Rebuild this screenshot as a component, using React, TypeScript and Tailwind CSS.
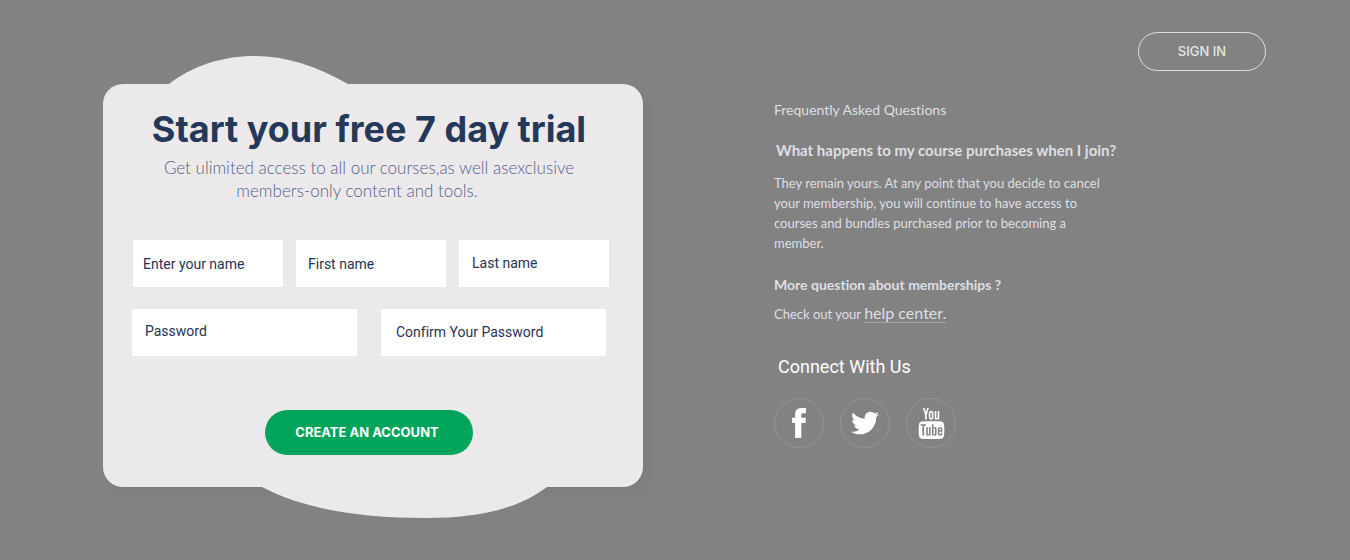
import { TfiFacebook, TfiTwitterAlt, TfiYoutube } from "react-icons/tfi";

type FieldProps = {
  name: string;
  label: string;
  type?: string;
  padding: string;
};

function Field({ name, label, type = "text", padding }: FieldProps) {
  return (
    <input
      name={name}
      type={type}
      aria-label={label}
      placeholder={label}
      className={`h-[47px] w-full min-w-0 bg-white font-['Roboto',sans-serif] text-sm text-[#263357] outline-none placeholder:text-[#263357] placeholder:opacity-100 ${padding}`}
    />
  );
}

function TrialCard() {
  return (
    <section className="relative mt-[84px] w-full max-w-[540px] rounded-[20px] bg-[#ebe9ea] pb-8 shadow-[6px_6px_8px_rgba(0,0,0,0.03)]">
      <svg
        className="absolute bottom-full left-[65px] -mb-px"
        width="182"
        height="30"
        viewBox="0 0 182 30"
        fill="#ebe9ea"
        aria-hidden="true"
      >
        <path d="M0 29.5 C24 11 54 1 87 1 C118 1 148 11 181 29.5 V30 H0 Z" />
      </svg>
      <svg
        className="absolute left-[159px] top-full -mt-px"
        width="286"
        height="33"
        viewBox="0 0 286 33"
        fill="#ebe9ea"
        aria-hidden="true"
      >
        <path d="M0 0 V1 C44 24 100 32 164 32 C216 32 256 23 285 1 V0 Z" />
      </svg>

      <div className="pt-[22px] pr-2 text-center">
        <h1 className="font-['Inter',sans-serif] text-4xl leading-[46px] font-bold text-[#263859]">
          Start your free 7 day trial
        </h1>
        <p className="mt-1 text-[17px] leading-[23px] font-light text-[#53628a]">
          Get ulimited access to all our courses,as well asexclusive{" "}
          <span className="block pr-6">members-only content and tools.</span>
        </p>
      </div>

      <form className="mt-[38px]" onSubmit={(e) => e.preventDefault()}>
        <div className="grid grid-cols-3 gap-[13px] pr-[34px] pl-[30px]">
          <Field name="full-name" label="Enter your name" padding="px-[10px]" />
          <Field name="first-name" label="First name" padding="px-3" />
          <Field name="last-name" label="Last name" padding="px-[13px] pb-0.5" />
        </div>
        <div className="mt-[22px] grid grid-cols-2 gap-6 pr-[37px] pl-[29px]">
          <Field name="password" label="Password" type="password" padding="px-[13px] pb-1" />
          <Field name="confirm-password" label="Confirm Your Password" type="password" padding="px-[15px] pb-0.5" />
        </div>
        <div className="mt-[54px] flex justify-center pr-2">
          <button
            type="submit"
            className="h-[45px] w-[208px] rounded-full bg-[#00a45a] pr-1 font-['Inter',sans-serif] text-[13px] font-bold text-white"
          >
            CREATE AN ACCOUNT
          </button>
        </div>
      </form>
    </section>
  );
}

const socials = [
  { label: "Facebook", icon: <TfiFacebook size={30} /> },
  { label: "Twitter", icon: <TfiTwitterAlt size={28} /> },
  { label: "YouTube", icon: <TfiYoutube size={31} /> },
];

export default function App() {
  return (
    <main className="flex min-h-screen items-start gap-[131px] bg-[#828282] pr-[84px] pb-[73px] pl-[103px] font-['Lato',sans-serif] [font-variant-ligatures:none]">
      <TrialCard />
      <div className="flex flex-1 basis-[492px] shrink-0 flex-col pt-8 text-[#dedfe3]">
        <button
          type="button"
          className="h-[39px] w-[128px] self-end rounded-full border border-[#dedede] font-['Inter',sans-serif] text-[13px] font-medium text-[#e6e6e6]"
        >
          SIGN IN
        </button>

        <h2 className="mt-[29px] text-sm leading-5">Frequently Asked Questions</h2>
        <h3 className="mt-5 pl-0.5 text-[15px] leading-5 font-bold">
          What happens to my course purchases when I join?
        </h3>
        <p className="mt-[13px] max-w-[340px] text-[13px] leading-5">
          They remain yours. At any point that you decide to cancel your membership, you will continue to have
          access to courses and bundles purchased prior to becoming a member.
        </p>
        <h3 className="mt-[22px] text-sm leading-5 font-bold">More question about memberships ?</h3>
        <p className="mt-2 text-[13px] leading-[22px]">
          Check out your{" "}
          <a href="#help" className="border-b border-[#a5a5a8] text-base leading-none">
            help center.
          </a>
        </p>

        <h2 className="mt-[30px] pl-1 font-['Roboto',sans-serif] text-lg leading-6 text-white">Connect With Us</h2>
        <ul className="mt-[19px] flex gap-4">
          {socials.map(({ label, icon }) => (
            <li key={label}>
              <a
                href={`#${label.toLowerCase()}`}
                aria-label={label}
                className="flex size-[50px] items-center justify-center rounded-full border border-[#949494] text-white"
              >
                {icon}
              </a>
            </li>
          ))}
        </ul>
      </div>
    </main>
  );
}
